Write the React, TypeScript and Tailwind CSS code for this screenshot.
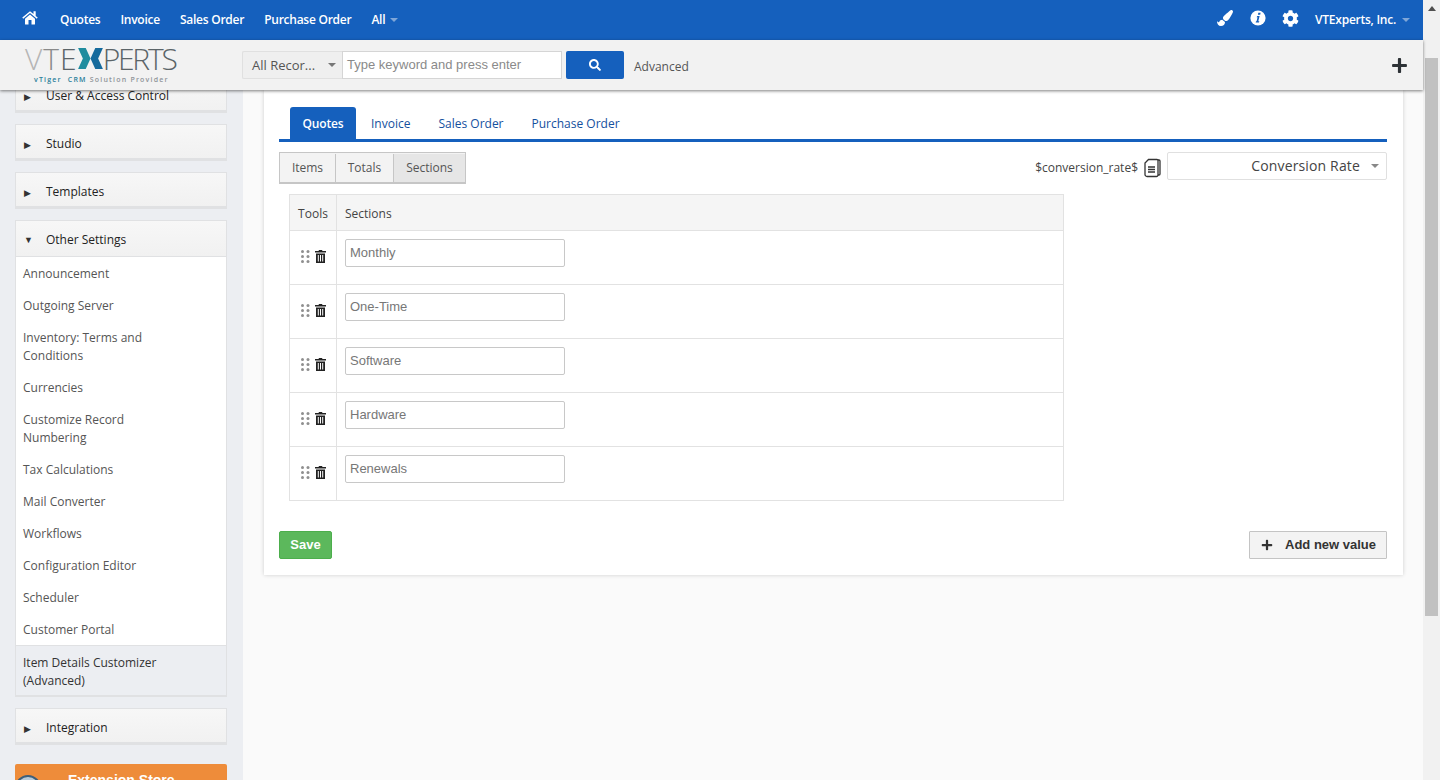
import { FaCog, FaPaintBrush, FaPlus, FaSearch } from "react-icons/fa";

const navLinks = ["Quotes", "Invoice", "Sales Order", "Purchase Order"];
const tabs = ["Invoice", "Sales Order", "Purchase Order"];
const sections = ["Monthly", "One-Time", "Software", "Hardware", "Renewals"];
const settings = [
  "Announcement",
  "Outgoing Server",
  "Inventory: Terms and Conditions",
  "Currencies",
  "Customize Record Numbering",
  "Tax Calculations",
  "Mail Converter",
  "Workflows",
  "Configuration Editor",
  "Scheduler",
  "Customer Portal",
];

function Caret({ className = "" }: { className?: string }) {
  return <span className={`inline-block border-x-[4px] border-t-[4px] border-x-transparent ${className}`} />;
}

function Collapsed({ label }: { label: string }) {
  return (
    <div className="flex h-[37px] shrink-0 items-center border border-b-[3px] border-[#e0e1e3] bg-linear-to-b from-[#f7f7f7] to-[#f1f1f1] pt-[5px] text-[#222]">
      <span className="ml-[8px] w-[22px] text-[9px] leading-none text-[#333]">▶</span>
      <span>{label}</span>
    </div>
  );
}

function HomeIcon() {
  return (
    <svg width="16" height="15" viewBox="0 0 16 15" fill="#fff" className="mt-[-5px] ml-[22px]">
      <path d="M3 8.700 8 4.500l5 4.200V14a.6.6 0 0 1-.6.6H9.500V10h-3v4.600H3.600A.6.600 0 0 1 3 14z" />
      <path d="M.3 7.600 8 1.200l3.500 2.900V1.300h2.200v4.600l2 1.700-.9 1.100L8 3 1.200 8.700z" />
    </svg>
  );
}

function InfoIcon() {
  return (
    <svg width="16" height="16" viewBox="0 0 16 16" className="mt-[-4px] ml-[17px]">
      <circle cx="8" cy="8" r="7.600" fill="#fff" />
      <path d="M8.300 2.800h2.300l-.4 2H7.900zM7.300 6h2.300l-1.300 5.300h1l-.3 1.200H5.700l.3-1.200h.6l.9-4.100h-.9z" fill="#1560bd" />
    </svg>
  );
}

function TrashIcon() {
  return (
    <svg width="11" height="13" viewBox="0 0 11 13" fill="#222">
      <path d="M4 0h3l.5 1H11v1.500H0V1h3.500z" />
      <path fillRule="evenodd" d="M1 3.500h9V13H1zM2.800 5v6.500h1V5zM5 5v6.500h1V5zM7.200 5v6.500h1V5z" />
    </svg>
  );
}

function DragDots() {
  return (
    <svg width="9" height="13" viewBox="0 0 9 13" fill="#8f8f8f">
      {[1.5, 6.5, 11.5].map((y) => (
        <g key={y}>
          <circle cx="1.500" cy={y} r="1.500" />
          <circle cx="7" cy={y} r="1.500" />
        </g>
      ))}
    </svg>
  );
}

function CopyIcon() {
  return (
    <svg width="17" height="20" viewBox="0 0 17 20" fill="none" stroke="#333" strokeWidth="1.300">
      <path d="M12 2h3a1 1 0 0 1 1 1v13a1 1 0 0 1-1 1h-1" />
      <path d="M4.500 1.500H13a1 1 0 0 1 1 1V17a1.500 1.500 0 0 1-1.500 1.500H3A2 2 0 0 1 1 16.500V5z" fill="#fff" />
      <path d="M4 9h7M4 11.500h7M4 14h7" strokeWidth="1.400" />
    </svg>
  );
}

function Logo() {
  return (
    <div className="ml-[25px] flex w-[217px] shrink-0 flex-col">
      <div className="flex h-[24px] items-center text-[30px] leading-[24px] font-light text-[#5b6468]">
        <span className="tracking-[1px]">
          <span className="text-[#b5b5b5]">V</span>
          <span className="text-[#8a8a8a]">T</span>
          <span>E</span>
        </span>
        <svg width="25" height="21" viewBox="0 0 26 22">
          <path d="M0 0h8l5 11-5 11H0l5-11z" fill="#1f8c9e" />
          <path d="M26 0h-8l-5 11 5 11h8l-5-11z" fill="#156a9c" />
        </svg>
        <span className="tracking-[-2.2px]">PERTS</span>
      </div>
      <div className="mt-[4px] ml-[9px] text-[7px] leading-[9px] font-semibold tracking-[1.200px] text-[#8f9499]">
        <span className="text-[#2b7f9a]">vTiger</span> <span className="ml-[3px] text-[#2b7f9a]">CRM</span> Solution Provider
      </div>
    </div>
  );
}

export default function App() {
  return (
    <div className="flex h-[780px] w-[1440px] overflow-hidden bg-[#fafafa] font-['Open_Sans',sans-serif] text-[12px] leading-[18px] text-[#333]">
      <div className="flex w-[1423px] flex-col">
        <header className="flex h-[40px] shrink-0 items-center bg-[#1560bd] text-white">
          <HomeIcon />
          <nav className="ml-[22px] flex items-center gap-[20px] font-semibold tracking-[-0.250px]">
            {navLinks.map((l) => (
              <span key={l}>{l}</span>
            ))}
            <span className="flex items-center gap-[5px]">
              All <Caret className="border-t-[#7fa6d8]" />
            </span>
          </nav>
          <div className="ml-auto flex items-center pr-[13px]">
            <FaPaintBrush className="mt-[-4px] text-[16px]" />
            <InfoIcon />
            <FaCog className="mt-[-4px] ml-[16px] text-[17px]" />
            <span className="ml-[16px] font-semibold tracking-[-0.250px]">VTExperts, Inc.</span>
            <Caret className="ml-[6px] border-t-[#7fa6d8]" />
          </div>
        </header>

        <div className="relative z-10 flex h-[50px] shrink-0 items-center bg-[#f2f2f2] shadow-[0_1px_3px_rgba(0,0,0,0.5)]">
          <Logo />
          <div className="flex h-[28px] w-[100px] items-center justify-between rounded-l-[2px] border border-r-0 border-[#e0e0e0] bg-[#efefef] pr-[6px] pl-[9px] text-[13px] text-[#555]">
            <span>All Recor...</span>
            <Caret className="border-t-[#777]" />
          </div>
          <div className="flex h-[28px] w-[220px] items-center border border-[#d5d5d5] bg-white pb-px pl-[4px] font-['Liberation_Sans',sans-serif] text-[13px] text-[#8a8a8a]">
            Type keyword and press enter
          </div>
          <button className="ml-[4px] flex h-[28px] w-[58px] items-center justify-center rounded-[2px] bg-[#1560bd] text-[12px] text-white">
            <FaSearch />
          </button>
          <span className="mt-[4px] ml-[10px] text-[#555]">Advanced</span>
          <FaPlus className="mr-[15px] ml-auto text-[17px] text-[#2d3236]" />
        </div>

        <div className="flex min-h-0 flex-1">
          <aside className="flex w-[243px] shrink-0 flex-col gap-[11px] overflow-hidden bg-[#eceef2] pr-[16px] pl-[15px]">
            <div className="mt-[-14px]">
              <Collapsed label="User & Access Control" />
            </div>
            <Collapsed label="Studio" />
            <Collapsed label="Templates" />
            <div className="shrink-0 border border-b-[2px] border-[#e0e1e3] bg-white">
              <div className="flex h-[36px] items-center border-b border-[#e0e1e3] bg-linear-to-b from-[#f7f7f7] to-[#f1f1f1] pt-[2px] text-[#222]">
                <span className="ml-[8px] w-[22px] text-[9px] leading-none text-[#333]">▼</span>
                <span>Other Settings</span>
              </div>
              {settings.map((s) => (
                <div key={s} className="w-[158px] pt-[8px] pb-[6px] pl-[7px] text-[#555]">
                  {s}
                </div>
              ))}
              <div className="border-t border-[#e0e1e3] bg-[#eceef2] pt-[8px] pb-[5px] pl-[7px] text-[#333]">
                <div className="w-[150px]">Item Details Customizer (Advanced)</div>
              </div>
            </div>
            <Collapsed label="Integration" />
            <div className="relative mt-[8px] h-[40px] shrink-0 rounded-[2px] bg-[#ee8c3a] pt-[7px] pl-[53px] font-['Liberation_Sans',sans-serif] text-[14px] font-bold text-white">
              <span className="absolute top-[11px] left-0 h-[28px] w-[26px] rounded-full border-2 border-[#3d5f7a] bg-[#b9cbd9]" />
              Extension Store
            </div>
          </aside>

          <main className="min-w-0 flex-1 pr-[20px] pl-[21px]">
            <div className="bg-white px-[15px] pt-[17px] pr-[16px] pb-[16px] shadow-[0_0_4px_rgba(0,0,0,0.18)]">
              <div className="flex h-[35px] border-b-[3px] border-[#1560bd] pl-[11px] text-[#14509e]">
                <div className="mr-px flex w-[66px] items-center justify-center rounded-t-[3px] bg-[#1560bd] pt-px font-semibold tracking-[-0.150px] text-white">
                  Quotes
                </div>
                {tabs.map((t) => (
                  <div key={t} className="flex items-center px-[14px] pt-px">
                    {t}
                  </div>
                ))}
              </div>

              <div className="mt-[10px] flex items-start justify-between">
                <div className="flex h-[32px] items-center border border-b-[2px] border-[#c6c6c6] bg-[#f3f3f3] pt-px text-[#555]">
                  <div className="flex h-full w-[56px] items-center justify-center border-r border-[#c6c6c6]">Items</div>
                  <div className="flex h-full w-[58px] items-center justify-center border-r border-[#c6c6c6]">Totals</div>
                  <div className="flex h-full w-[71px] items-center justify-center bg-[#e6e6e6]">Sections</div>
                </div>
                <div className="flex items-center">
                  <span className="mt-[4px] text-[#444]">$conversion_rate$</span>
                  <span className="mx-[6px] mt-[4px] flex">
                    <CopyIcon />
                  </span>
                  <div className="flex h-[28px] w-[220px] items-center justify-end rounded-[2px] border border-[#e0e0e0] pr-[7px] text-[14px] tracking-[0.150px] text-[#444]">
                    Conversion Rate
                    <Caret className="ml-[11px] border-t-[#888]" />
                  </div>
                </div>
              </div>

              <table className="mt-[10px] ml-[10px] w-[775px] border-collapse">
                <thead>
                  <tr className="h-[36px] bg-[#f5f5f5] text-left text-[#444]">
                    <th className="w-[47px] border border-[#e2e2e2] pt-[2px] text-center font-normal">Tools</th>
                    <th className="border border-[#e2e2e2] pt-[2px] pl-[8px] font-normal">Sections</th>
                  </tr>
                </thead>
                <tbody>
                  {sections.map((s) => (
                    <tr key={s} className="h-[54px]">
                      <td className="border border-[#e2e2e2] pb-[3px]">
                        <div className="flex items-center justify-center gap-[5px]">
                          <DragDots />
                          <TrashIcon />
                        </div>
                      </td>
                      <td className="border border-[#e2e2e2] pb-[17px] pl-[8px] align-top">
                        <input
                          readOnly
                          value={s}
                          className="mt-[8px] block h-[28px] w-[220px] rounded-[2px] border border-[#c8c8c8] pb-[2px] pl-[4px] font-['Liberation_Sans',sans-serif] text-[13px] text-[#777]"
                        />
                      </td>
                    </tr>
                  ))}
                </tbody>
              </table>

              <div className="mt-[30px] flex justify-between font-['Liberation_Sans',sans-serif]">
                <button className="h-[28px] w-[53px] rounded-[2px] border border-[#4cae4c] bg-[#5cb85c] text-[13px] font-bold text-white">
                  Save
                </button>
                <button className="flex h-[28px] w-[138px] items-center rounded-[1px] border border-[#c4c4c4] bg-[#f3f3f3] text-[13px] font-bold text-[#333]">
                  <FaPlus className="ml-[11px] text-[12px]" />
                  <span className="ml-[12px]">Add new value</span>
                </button>
              </div>
            </div>
          </main>
        </div>
      </div>

      <div className="flex w-[17px] shrink-0 flex-col items-center bg-[#f1f1f1]">
        <span className="mt-[6px] border-x-[4px] border-b-[5px] border-x-transparent border-b-[#505050]" />
        <div className="mt-[47px] h-[558px] w-[13px] bg-[#c1c1c1]" />
      </div>
    </div>
  );
}
